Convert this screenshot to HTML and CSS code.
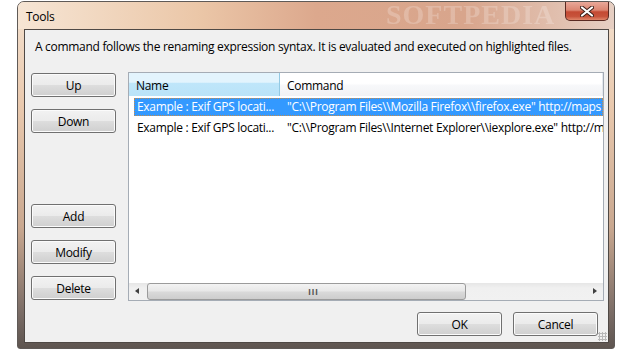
FILE: index.html
```html
<!DOCTYPE html>
<html lang="en">
    <head>
        <meta charset="UTF-8" />
        <meta name="viewport" content="width=device-width, initial-scale=1.0" />
        <title>Tools</title>
        <link rel="stylesheet" href="styles.css">
    </head>
    <body>
        <section class="window">
            <header class="titlebar">
                <span class="title">Tools</span>
                <span class="mark">SOFTPEDIA</span>
                <button class="close" type="button">
                    <svg width="14" height="11" viewBox="0 0 14 11">
                        <path d="M2 1.5 L12 9.5 M12 1.5 L2 9.5" stroke="#3a1d16" stroke-width="4" stroke-linecap="round"/>
                        <path d="M2 1.5 L12 9.5 M12 1.5 L2 9.5" stroke="#ffffff" stroke-width="2.2" stroke-linecap="round"/>
                    </svg>
                </button>
            </header>
            <section class="client">
                <p class="intro">A command follows the renaming expression syntax. It is evaluated and executed on highlighted files.</p>
                <section class="main">
                    <div class="side">
                        <button class="btn" type="button">Up</button>
                        <button class="btn" type="button">Down</button>
                        <div class="spacer"></div>
                        <button class="btn" type="button">Add</button>
                        <button class="btn" type="button">Modify</button>
                        <button class="btn" type="button">Delete</button>
                    </div>
                    <div class="list">
                        <div class="head">
                            <div class="col name hot">Name</div>
                            <div class="col cmd">Command</div>
                        </div>
                        <div class="rows">
                            <div class="row selected">
                                <span class="name">Example : Exif GPS locati...</span>
                                <span class="cmd">"C:\\Program Files\\Mozilla Firefox\\firefox.exe" http://maps</span>
                            </div>
                            <div class="row">
                                <span class="name">Example : Exif GPS locati...</span>
                                <span class="cmd">"C:\\Program Files\\Internet Explorer\\iexplore.exe" http://m</span>
                            </div>
                        </div>
                        <div class="hscroll">
                            <span class="arrow left"></span>
                            <div class="track">
                                <div class="thumb"><span class="grip">III</span></div>
                            </div>
                            <span class="arrow right"></span>
                        </div>
                    </div>
                </section>
                <footer class="actions">
                    <button class="btn" type="button">OK</button>
                    <button class="btn" type="button">Cancel</button>
                    <span class="grip-corner"></span>
                </footer>
            </section>
        </section>
    </body>
</html>
```

FILE: styles.css
```css
* {
    padding: 0;
    margin: 0;
    box-sizing: border-box;
}
body {
    background-color: #ffffff;
    font-family: "Open Sans", "Noto Sans", sans-serif;
    font-size: 12px;
    letter-spacing: -0.3px;
    color: #000000;
}

/* window frame */
.window {
    width: 598px;
    height: 348px;
    margin: 1px 0 0 17px;
    display: flex;
    flex-direction: column;
    border: 1px solid #5f5a57;
    border-radius: 7px 7px 3px 3px;
    background: linear-gradient(to bottom, #f4e1cf 0%, #e9c9ae 30%, #c9a890 65%, #7a6c66 90%, #5e5550 100%);
    padding: 0 5px 5px 6px;
}
.titlebar {
    height: 27px;
    display: flex;
    align-items: flex-start;
    position: relative;
    background: linear-gradient(to right, #f6e5d4 0%, #ebc7a8 30%, #dca88d 50%, #d8a58c 75%, #e6cfc3 100%);
    margin: 0 -5px 0 -6px;
    padding: 0 5px 0 8px;
    border-radius: 6px 6px 0 0;
}
.title {
    font-size: 12px;
    padding-top: 6px;
    color: #000000;
}
.mark {
    position: absolute;
    left: 368px;
    top: 0;
    font-family: "Liberation Serif", serif;
    font-weight: bold;
    font-size: 28px;
    line-height: 26px;
    letter-spacing: 1px;
    color: rgba(255, 255, 255, 0.22);
    filter: blur(0.6px);
}
.close {
    margin-left: auto;
    margin-right: 0;
    width: 44px;
    height: 19px;
    border: 1px solid #5a2a22;
    border-top: none;
    border-radius: 0 0 5px 5px;
    background: linear-gradient(to bottom, #e9a899 0%, #dc8672 45%, #c44a33 55%, #c7533b 80%, #e0876b 100%);
    display: flex;
    align-items: center;
    justify-content: center;
    position: relative;
}

/* client area */
.client {
    flex: 1;
    background-color: #f0f0f0;
    border: 1px solid #4f4945;
    display: flex;
    flex-direction: column;
}
.intro {
    padding: 8px 0 0 10px;
    height: 42px;
    line-height: 17px;
}
.main {
    display: flex;
    gap: 12px;
    padding-left: 6px;
}
.side {
    width: 85px;
    display: flex;
    flex-direction: column;
    gap: 12px;
    padding-top: 1px;
}
.spacer {
    height: 47px;
}

/* buttons */
.btn {
    width: 85px;
    height: 24px;
    font-family: "Open Sans", "Noto Sans", sans-serif;
    font-size: 12px;
    letter-spacing: -0.3px;
    color: #000000;
    border: 1px solid #707070;
    border-radius: 3px;
    background: linear-gradient(to bottom, #f2f2f2 0%, #ebebeb 48%, #dddddd 52%, #cfcfcf 100%);
    box-shadow: inset 0 0 0 1px #fbfbfb;
}

/* list view */
.list {
    width: 476px;
    height: 229px;
    border: 1px solid #a5acb5;
    background-color: #ffffff;
    display: flex;
    flex-direction: column;
}
.head {
    display: flex;
    height: 23px;
}
.col {
    padding: 4px 0 0 7px;
    border-right: 1px solid #e3e8ee;
    background: linear-gradient(to bottom, #ffffff 0%, #ffffff 45%, #f7f8fa 55%, #f1f2f4 100%);
}
.col.name {
    width: 151px;
}
.col.cmd {
    flex: 1;
}
.col.hot {
    background: linear-gradient(to bottom, #e3f4fd 0%, #e3f4fd 40%, #bfe6fa 45%, #bae3f8 100%);
    border-right: 1px solid #93c9e3;
}
.rows {
    flex: 1;
    padding: 2px 0 0 5px;
    overflow: hidden;
}
.row {
    height: 18px;
    line-height: 18px;
    display: flex;
    white-space: nowrap;
    overflow: hidden;
    margin-bottom: 3px;
}
.row .name {
    width: 146px;
    flex-shrink: 0;
    overflow: hidden;
    padding-left: 3px;
}
.row .cmd {
    padding-left: 7px;
}
.row.selected {
    background-color: #3399ff;
    color: #ffffff;
    outline: 1px dotted #c28c4e;
    outline-offset: -1px;
}

/* horizontal scroll bar */
.hscroll {
    height: 17px;
    display: flex;
    align-items: center;
    background: linear-gradient(to bottom, #e6e6e6 0%, #f0f0f0 30%, #f1f1f1 100%);
}
.arrow {
    width: 17px;
    height: 17px;
    position: relative;
}
.arrow::after {
    content: "";
    position: absolute;
    top: 5px;
    border-top: 3px solid transparent;
    border-bottom: 3px solid transparent;
}
.arrow.left::after {
    left: 6px;
    border-right: 4px solid #404040;
}
.arrow.right::after {
    left: 7px;
    border-left: 4px solid #404040;
}
.track {
    flex: 1;
    height: 17px;
    padding: 0 1px;
}
.thumb {
    width: 319px;
    height: 17px;
    border: 1px solid #9b9b9b;
    border-radius: 3px;
    background: linear-gradient(to bottom, #f3f3f3 0%, #e8e8e8 45%, #d9d9d9 55%, #cdcdcd 100%);
    display: flex;
    justify-content: center;
    align-items: center;
}
.grip {
    font-size: 9px;
    font-family: "Liberation Sans", sans-serif;
    font-weight: bold;
    letter-spacing: 1px;
    color: #555555;
    padding-left: 14px;
}

/* footer */
.actions {
    display: flex;
    justify-content: flex-end;
    gap: 11px;
    padding: 11px 10px 0 0;
    position: relative;
    flex: 1;
}
.grip-corner {
    position: absolute;
    right: 1px;
    bottom: 1px;
    width: 9px;
    height: 9px;
    background-image: radial-gradient(circle, #b8b8b8 1px, transparent 1.2px);
    background-size: 3px 3px;
}
```
